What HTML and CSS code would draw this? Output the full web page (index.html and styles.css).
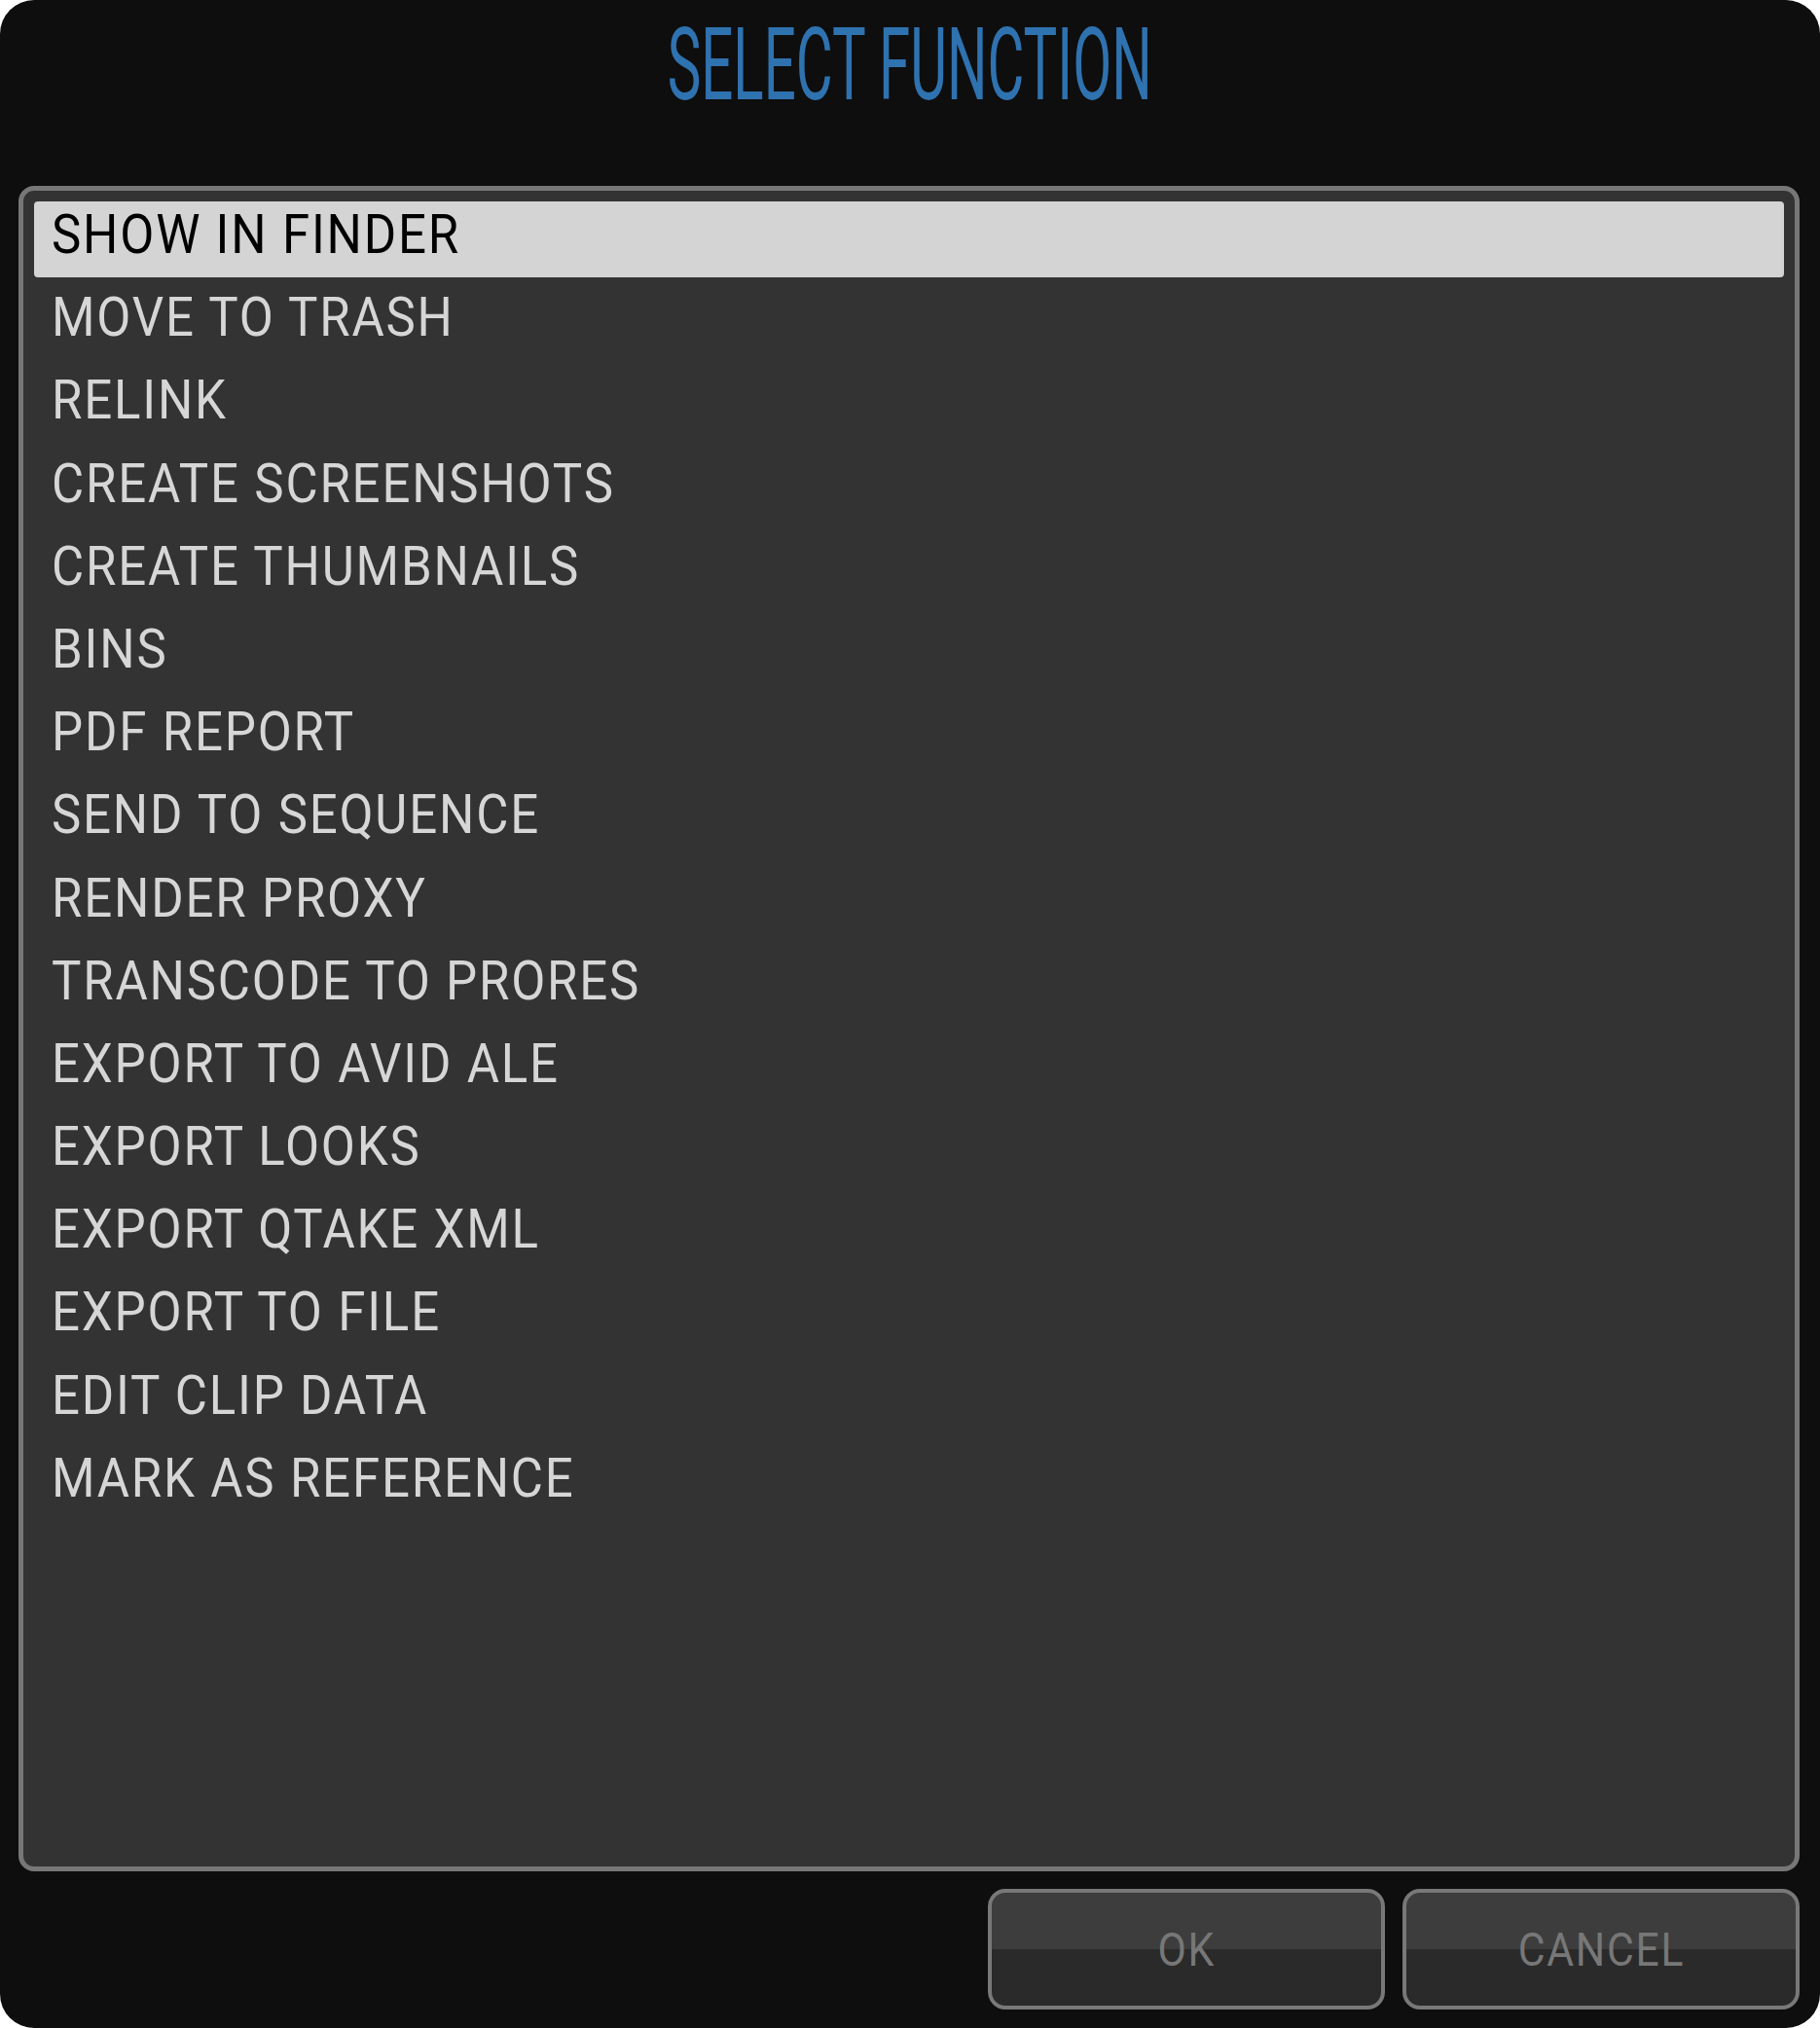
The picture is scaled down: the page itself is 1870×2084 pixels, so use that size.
FILE: index.html
```html
<!DOCTYPE html>
<html>
<head>
<meta charset="utf-8">
<link rel="stylesheet" href="styles.css">
</head>
<body>
<div class="window">
  <div class="title"><span class="title-text">SELECT FUNCTION</span></div>
  <div class="panel">
    <div class="row selected"><span class="label">SHOW IN FINDER</span></div>
    <div class="row"><span class="label">MOVE TO TRASH</span></div>
    <div class="row"><span class="label">RELINK</span></div>
    <div class="row"><span class="label">CREATE SCREENSHOTS</span></div>
    <div class="row"><span class="label">CREATE THUMBNAILS</span></div>
    <div class="row"><span class="label">BINS</span></div>
    <div class="row"><span class="label">PDF REPORT</span></div>
    <div class="row"><span class="label">SEND TO SEQUENCE</span></div>
    <div class="row"><span class="label">RENDER PROXY</span></div>
    <div class="row"><span class="label">TRANSCODE TO PRORES</span></div>
    <div class="row"><span class="label">EXPORT TO AVID ALE</span></div>
    <div class="row"><span class="label">EXPORT LOOKS</span></div>
    <div class="row"><span class="label">EXPORT QTAKE XML</span></div>
    <div class="row"><span class="label">EXPORT TO FILE</span></div>
    <div class="row"><span class="label">EDIT CLIP DATA</span></div>
    <div class="row"><span class="label">MARK AS REFERENCE</span></div>
  </div>
  <div class="footer">
    <div class="button"><span class="btn-text">OK</span></div>
    <div class="button"><span class="btn-text">CANCEL</span></div>
  </div>
</div>
</body>
</html>
```
FILE: styles.css
```css
html, body {
  margin: 0;
  padding: 0;
  background: #ffffff;
}
.window {
  width: 1870px;
  height: 2084px;
  background: #0e0e0e;
  border-radius: 35px;
  display: flex;
  flex-direction: column;
  box-sizing: border-box;
  font-family: Roboto, "Liberation Sans", sans-serif;
}
.title {
  height: 191px;
  display: flex;
  justify-content: center;
  align-items: flex-start;
}
.title-text {
  display: inline-block;
  font-size: 104px;
  line-height: 1;
  font-weight: 400;
  color: #2f72b0;
  transform: scaleX(0.56);
  margin-top: 15px;
  white-space: nowrap;
}
.panel {
  height: 1732px;
  margin: 0 21px 0 19px;
  border: 5px solid #777777;
  border-radius: 16px;
  background: #333333;
  box-sizing: border-box;
  padding: 11px 11px;
  display: flex;
  flex-direction: column;
  gap: 7.2px;
}
.row {
  height: 78px;
  flex: 0 0 78px;
  border-radius: 4px;
  padding-left: 18px;
  color: #d6d6d6;
  font-size: 56px;
  line-height: 68px;
  letter-spacing: 2px;
  white-space: nowrap;
}
.row.selected {
  background: #d4d4d4;
  color: #000000;
}
.label {
  display: inline-block;
  transform: scaleX(0.91);
  transform-origin: left center;
}
.footer {
  display: flex;
  justify-content: flex-end;
  gap: 18px;
  margin-top: 18px;
  padding-right: 21px;
}
.button {
  width: 408px;
  height: 124px;
  box-sizing: border-box;
  border: 4px solid #787878;
  border-radius: 18px;
  background: linear-gradient(to bottom, #3d3d3d 0, #3d3d3d 50%, #2a2a2a 50%, #2a2a2a 100%);
  display: flex;
  align-items: center;
  justify-content: center;
  color: #777777;
  font-size: 49px;
  letter-spacing: 2px;
}
.btn-text {
  display: inline-block;
  transform: scaleX(0.87);
}
```
